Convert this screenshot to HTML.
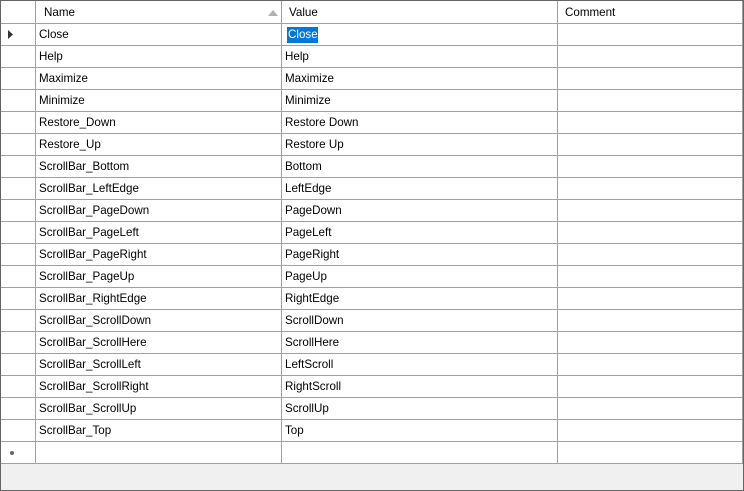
<!DOCTYPE html>
<html><head><style>
*{margin:0;padding:0;box-sizing:border-box}
body{width:744px;height:491px;background:#f0f0f0;font-family:"Liberation Sans",sans-serif;font-size:11.6px;color:#000;position:relative;overflow:hidden}
.frame{position:absolute;left:0;top:0;width:744px;height:491px;border:1px solid #646464}
.grid{position:absolute;left:1px;top:1px;width:742px;height:463px;background:#fff}
.hl{position:absolute;height:1px;background:#a0a0a0;left:0;width:742px}
.vl{position:absolute;width:1px;background:#a0a0a0;top:0;height:463px}
.t{position:absolute;white-space:nowrap;line-height:14px}
</style></head><body>
<div class="frame"></div>
<div class="grid">
<div class="hl" style="top:22px"></div>
<div class="vl" style="left:34px"></div>
<div class="vl" style="left:280px"></div>
<div class="vl" style="left:556px"></div>
<div class="vl" style="left:741px"></div>
<div class="t" style="left:43px;top:5px">Name</div>
<div class="t" style="left:288px;top:5px">Value</div>
<div class="t" style="left:564px;top:5px">Comment</div>
<svg style="position:absolute;left:267px;top:9px" width="10" height="6"><path d="M0 6 L5 0 L10 6Z" fill="#b0b0b0"/></svg>
<svg style="position:absolute;left:7px;top:29px" width="5" height="9"><path d="M0 0 L5 4.5 L0 9Z" fill="#333"/></svg>
<div style="position:absolute;left:9px;top:450px;width:4px;height:4px;border-radius:2px;background:#666"></div>
<div style="position:absolute;left:286px;top:26px;width:31px;height:16px;background:#0078d7"></div>
<div id="rows"></div>
</div>
<script>
var d=[["Close","Close"],["Help","Help"],["Maximize","Maximize"],["Minimize","Minimize"],["Restore_Down","Restore Down"],["Restore_Up","Restore Up"],["ScrollBar_Bottom","Bottom"],["ScrollBar_LeftEdge","LeftEdge"],["ScrollBar_PageDown","PageDown"],["ScrollBar_PageLeft","PageLeft"],["ScrollBar_PageRight","PageRight"],["ScrollBar_PageUp","PageUp"],["ScrollBar_RightEdge","RightEdge"],["ScrollBar_ScrollDown","ScrollDown"],["ScrollBar_ScrollHere","ScrollHere"],["ScrollBar_ScrollLeft","LeftScroll"],["ScrollBar_ScrollRight","RightScroll"],["ScrollBar_ScrollUp","ScrollUp"],["ScrollBar_Top","Top"]];
var h="";
for(var i=0;i<d.length;i++){var y=23+i*22;
h+='<div class="t" style="left:38px;top:'+(y+4)+'px">'+d[i][0]+'</div>';
h+='<div class="t" style="left:'+(i==0?287:284)+'px;top:'+(y+4)+'px;'+(i==0?'color:#fff':'')+'">'+d[i][1]+'</div>';
h+='<div class="hl" style="top:'+(y+21)+'px"></div>';}
h+='<div class="hl" style="top:462px"></div>';
document.getElementById("rows").innerHTML=h;
</script>
</body></html>
